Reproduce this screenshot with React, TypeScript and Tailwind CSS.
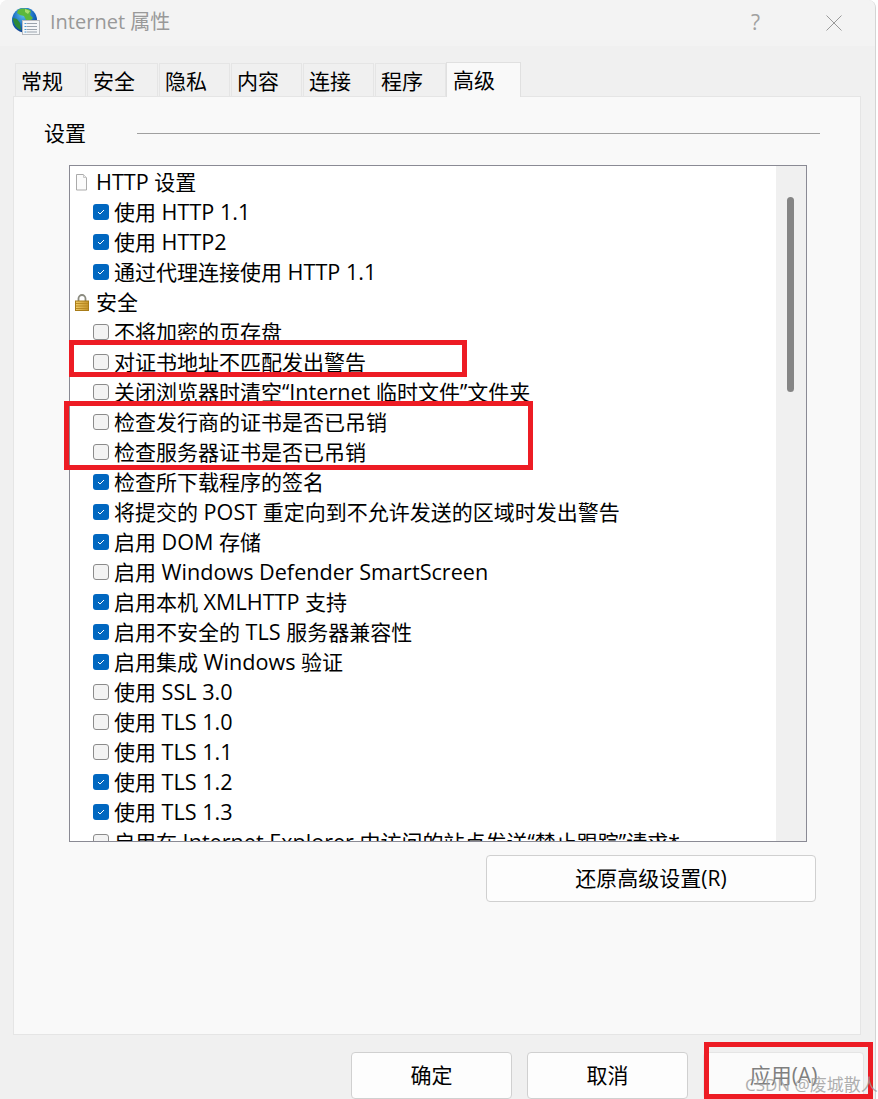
const rows: { text: string; checked?: boolean; kind?: "page" | "lock" }[] = [
  { text: "HTTP 设置", kind: "page" },
  { text: "使用 HTTP 1.1", checked: true },
  { text: "使用 HTTP2", checked: true },
  { text: "通过代理连接使用 HTTP 1.1", checked: true },
  { text: "安全", kind: "lock" },
  { text: "不将加密的页存盘" },
  { text: "对证书地址不匹配发出警告" },
  { text: "关闭浏览器时清空“Internet 临时文件”文件夹" },
  { text: "检查发行商的证书是否已吊销" },
  { text: "检查服务器证书是否已吊销" },
  { text: "检查所下载程序的签名", checked: true },
  { text: "将提交的 POST 重定向到不允许发送的区域时发出警告", checked: true },
  { text: "启用 DOM 存储", checked: true },
  { text: "启用 Windows Defender SmartScreen" },
  { text: "启用本机 XMLHTTP 支持", checked: true },
  { text: "启用不安全的 TLS 服务器兼容性", checked: true },
  { text: "启用集成 Windows 验证", checked: true },
  { text: "使用 SSL 3.0" },
  { text: "使用 TLS 1.0" },
  { text: "使用 TLS 1.1" },
  { text: "使用 TLS 1.2", checked: true },
  { text: "使用 TLS 1.3", checked: true },
  { text: "启用在 Internet Explorer 中访问的站点发送“禁止跟踪”请求*" },
];

const tabs = ["常规", "安全", "隐私", "内容", "连接", "程序"];

// latin runs sit a bit wider than the CJK ones in the screenshot
function Label({ text }: { text: string }) {
  const parts = text.split(/([A-Za-z0-9. ]+)/);
  return (
    <span>
      {parts.map((p, i) =>
        i % 2 === 1 ? (
          <span key={i} className="text-[21.6px]">
            {p}
          </span>
        ) : (
          p
        )
      )}
    </span>
  );
}

function GlobeIcon() {
  return (
    <svg width="30" height="30" viewBox="0 0 30 30" className="shrink-0">
      <defs>
        <radialGradient id="sea" cx="0.45" cy="0.3" r="0.8">
          <stop offset="0" stopColor="#5cc0ea" />
          <stop offset="0.55" stopColor="#1668c0" />
          <stop offset="1" stopColor="#0a2f78" />
        </radialGradient>
      </defs>
      <circle cx="12.5" cy="12" r="12.5" fill="url(#sea)" />
      <path d="M6 2c4-2 9-2 13 1l-1 4 3 3-3 3-4-1-2-4-4-1-3-2z" fill="#5cb83c" />
      <path d="M13 1l5 2-2 3-3-2z" fill="#a8dc6c" />
      <path d="M1 10l4 1 3 4 1 7c-4-1-8-6-8-12z" fill="#2f8a38" />
      <rect x="10.5" y="12.5" width="17" height="14" fill="#f4f6f8" stroke="#b9bcc0" />
      <path d="M15 15.5h10M15 18.5h10M15 21.5h10M15 24h10" stroke="#9aa3ad" />
      <path d="M12.5 15.5h2M12.5 18.5h2M12.5 21.5h2M12.5 24h2" stroke="#4f9bd0" />
    </svg>
  );
}

function PageIcon() {
  return (
    <svg width="14" height="17" viewBox="0 0 14 17" className="shrink-0">
      <path d="M1.5 0.5h7l3 3v12.5h-10z" fill="#fbfbfb" stroke="#ababab" />
      <path d="M8.5 0.5v3h3" fill="#ececec" stroke="#c8c8c8" />
    </svg>
  );
}

function LockIcon() {
  return (
    <svg width="14" height="17" viewBox="0 0 14 17" className="shrink-0">
      <defs>
        <linearGradient id="gold" x1="0" y1="0" x2="1" y2="0">
          <stop offset="0" stopColor="#f0cc68" />
          <stop offset="1" stopColor="#c4922a" />
        </linearGradient>
      </defs>
      <path d="M3.5 7V4.5a3.5 3.5 0 0 1 7 0V7" fill="none" stroke="#8b8b80" strokeWidth="1.8" />
      <rect x="0.5" y="7" width="13" height="9.5" fill="url(#gold)" stroke="#a87c18" />
      <path d="M1 9.5h12M1 12h12M1 14.5h12" stroke="#b98a22" />
    </svg>
  );
}

function CheckBox({ checked }: { checked?: boolean }) {
  if (checked) {
    return (
      <span className="w-4 h-4 shrink-0 rounded-[3px] bg-[#0067c0] flex items-center justify-center">
        <svg width="8" height="6" viewBox="0 0 8 6">
          <path d="M1 3l2 2 4-4" fill="none" stroke="#fff" strokeWidth="1" />
        </svg>
      </span>
    );
  }
  return <span className="w-4 h-4 shrink-0 rounded-[3px] border border-[#8b8b8b] bg-[#f3f3f3]" />;
}

function Row({ text, checked, kind }: { text: string; checked?: boolean; kind?: "page" | "lock" }) {
  if (kind) {
    return (
      <div className="h-[30px] flex items-center pl-[5px] gap-[7px] whitespace-nowrap">
        {kind === "page" ? <PageIcon /> : <LockIcon />}
        <Label text={text} />
      </div>
    );
  }
  return (
    <div className="h-[30px] flex items-center pl-[23px] gap-[5px] whitespace-nowrap">
      <CheckBox checked={checked} />
      <Label text={text} />
    </div>
  );
}

export default function App() {
  return (
    <div className="relative w-[878px] h-[1099px] overflow-hidden bg-white text-[21px] leading-[30px] text-black font-['Open_Sans','Noto_Sans_CJK_SC',sans-serif]">
      <div className="w-[876px] h-[1099px] bg-[#f0f0f0] rounded-t-lg border-r border-[#d4d4d4] overflow-hidden">
        {/* title bar */}
        <div className="h-[46px] bg-[#f3f3f3] flex items-center pl-[12px] text-[#999999]">
          <GlobeIcon />
          <span className="ml-[8px] pb-[2px] text-[20px]">Internet 属性</span>
          <span className="ml-auto mr-[66px] pb-[2px] text-[#a0a0a0]">?</span>
          <svg width="16" height="16" viewBox="0 0 16 16" className="mr-[33px]">
            <path d="M0.5 0.5l15 15M15.5 0.5l-15 15" stroke="#999999" strokeWidth="1" />
          </svg>
        </div>

        {/* tabs */}
        <div className="h-[50px] flex items-end pl-[15px] gap-px">
          {tabs.map((t) => (
            <div
              key={t}
              className="w-[71px] h-[33px] pl-[5px] pt-[2px] bg-[#f0f0f0] border border-b-0 border-[#e5e5e5] flex items-center"
            >
              {t}
            </div>
          ))}
          <div className="relative z-10 -mb-px -ml-px w-[75px] h-[35px] pl-[6px] bg-[#f9f9f9] border border-b-0 border-[#e0e0e0] flex items-center">
            高级
          </div>
        </div>

        {/* pane */}
        <div className="ml-[13px] w-[848px] h-[939px] bg-[#f9f9f9] border border-[#e5e5e5] flex flex-col">
          <div className="h-[68px] flex items-center pl-[30px] pt-[4px]">
            <span>设置</span>
            <div className="ml-[51px] w-[683px] h-px bg-[#a0a0a0]" />
          </div>
          <div className="ml-[55px] w-[738px] h-[677px] bg-white border border-[#8a8a94] flex overflow-hidden">
            <div className="flex-1 pt-[1px] overflow-hidden">
              {rows.map((r) => (
                <Row key={r.text} {...r} />
              ))}
            </div>
            <div className="w-[30px] bg-[#f0f0f0] flex justify-center pt-[31px] pr-px">
              <div className="w-[7px] h-[195px] rounded-full bg-[#858585]" />
            </div>
          </div>
          <div className="mt-[13px] ml-[472px] w-[330px] h-[47px] pb-[2px] bg-[#fdfdfd] border border-[#d0d0d0] rounded-[4px] flex items-center justify-center">
            还原高级设置(R)
          </div>
        </div>

        {/* footer buttons */}
        <div className="mt-[17px] pl-[351px] flex gap-[15px]">
          <div className="w-[161px] h-[47px] pb-[2px] bg-[#fdfdfd] border border-[#d0d0d0] rounded-[4px] flex items-center justify-center">
            确定
          </div>
          <div className="w-[161px] h-[47px] pb-[2px] bg-[#fdfdfd] border border-[#d0d0d0] rounded-[4px] flex items-center justify-center">
            取消
          </div>
          <div className="w-[161px] h-[47px] pb-[2px] bg-[#fbfbfb] border border-[#e5e5e5] rounded-[4px] flex items-center justify-center text-[#7f7f7f]">
            应用(A)
          </div>
        </div>
      </div>

      {/* red annotation boxes */}
      <div className="absolute left-[69px] top-[340px] w-[398px] h-[37px] border-[5px] border-[#ed1c24]" />
      <div className="absolute left-[64px] top-[401px] w-[469px] h-[69px] border-[5px] border-[#ed1c24]" />
      <div className="absolute left-[704px] top-[1042px] w-[169px] h-[57px] border-[5px] border-[#ed1c24]" />

      {/* watermark */}
      <div className="absolute left-[745px] top-[1070px] text-[17px] text-[#9a9a9a]/80 whitespace-nowrap">CSDN @废城散人</div>
    </div>
  );
}
